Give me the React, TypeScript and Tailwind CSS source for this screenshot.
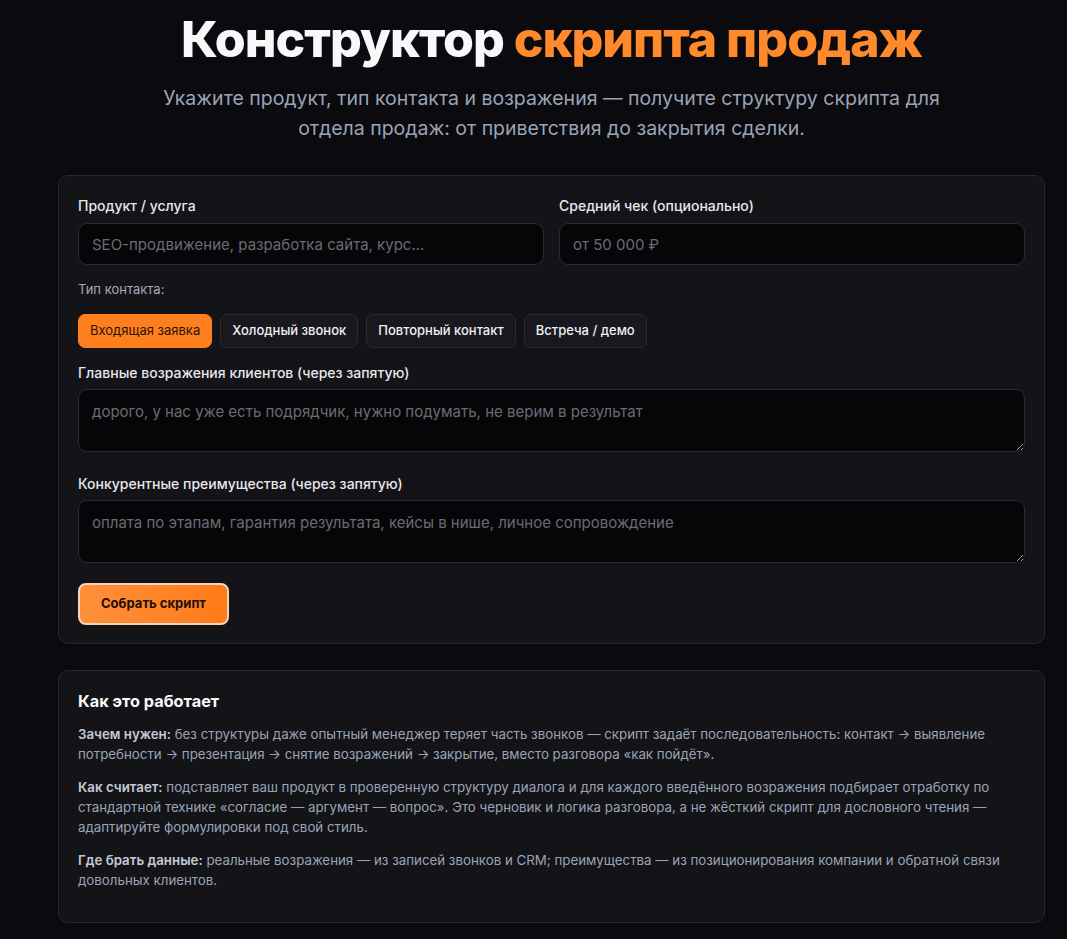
import { useState } from 'react'

const kinds = ['Входящая заявка', 'Холодный звонок', 'Повторный контакт', 'Встреча / демо']

const fieldCls =
  'w-full rounded-[9px] border border-[#2a2a31] bg-[#060609] px-[13px] text-[15px] text-white placeholder:text-[#6b6b74] outline-none'

export default function App() {
  const [kind, setKind] = useState(0)

  return (
    <div className="min-h-screen bg-[#0a0a0f] font-['Inter',sans-serif] text-white pl-[58px] pr-[22px] pb-6">
      <div className="text-center pt-[10px]">
        <h1 className="text-[50px] leading-[58px] font-extrabold tracking-[-0.02em] text-[#f8f8fa]">
          Конструктор <span className="text-[#ff8a2b]">скрипта продаж</span>
        </h1>
        <p className="mx-auto mt-[15px] max-w-[800px] text-[19.5px] leading-[30px] text-[#9aa4b6]">
          Укажите продукт, тип контакта и возражения — получите структуру скрипта для отдела продаж: от приветствия до закрытия сделки.
        </p>
      </div>

      <div className="mt-[32px] rounded-[10px] border border-[#26262d] bg-[#131318] px-[19px] pt-[19px] pb-[18px]">
        <div className="grid grid-cols-2 gap-[15px]">
          <div>
            <label className="block text-[14px] font-medium text-[#e8e8ec] mb-[7px]">Продукт / услуга</label>
            <input className={`${fieldCls} h-[42px]`} placeholder="SEO-продвижение, разработка сайта, курс..." />
          </div>
          <div>
            <label className="block text-[14px] font-medium text-[#e8e8ec] mb-[7px]">Средний чек (опционально)</label>
            <input className={`${fieldCls} h-[42px]`} placeholder="от 50 000 ₽" />
          </div>
        </div>

        <div className="mt-[15px] text-[13px] text-[#a3abba]">Тип контакта:</div>
        <div className="mt-[14px] flex gap-[8px]">
          {kinds.map((k, i) => (
            <button
              key={k}
              onClick={() => setKind(i)}
              className={
                i === kind
                  ? 'h-[34px] px-[11px] rounded-[7px] border border-[#ff7f1f] bg-[#ff7f1f] text-[13px] text-[#2a1405]'
                  : 'h-[34px] px-[11px] rounded-[7px] border border-[#2a2a31] bg-[#18181e] text-[13px] font-medium text-[#f0f0f3]'
              }
            >
              {k}
            </button>
          ))}
        </div>

        <label className="block mt-[14px] text-[14px] font-medium text-[#e8e8ec] mb-[6px]">
          Главные возражения клиентов (через запятую)
        </label>
        <textarea
          className={`${fieldCls} block h-[63px] py-[11px]`}
          placeholder="дорого, у нас уже есть подрядчик, нужно подумать, не верим в результат"
        />

        <label className="block mt-[21px] text-[14px] font-medium text-[#e8e8ec] mb-[6px]">
          Конкурентные преимущества (через запятую)
        </label>
        <textarea
          className={`${fieldCls} block h-[63px] py-[11px]`}
          placeholder="оплата по этапам, гарантия результата, кейсы в нише, личное сопровождение"
        />

        <button className="mt-[20px] h-[42px] px-[21px] rounded-[8px] border-2 border-[#f3d6bd] bg-gradient-to-r from-[#ff8f3a] to-[#ff7b14] text-[13px] font-bold text-[#1f0f04]">
          Собрать скрипт
        </button>
      </div>

      <div className="mt-[26px] rounded-[10px] border border-[#26262d] bg-[#131318] px-[19px] pt-[19px] pb-[32px]">
        <h2 className="text-[16.3px] font-bold text-[#f8f8fa] leading-[22px]">Как это работает</h2>
        <div className="mt-[12px] flex flex-col gap-[13px] text-[13.3px] leading-[20px] text-[#9aa4b6]">
          <p>
            <b className="font-semibold text-[#c3cad6]">Зачем нужен:</b> без структуры даже опытный менеджер теряет часть звонков — скрипт задаёт последовательность: контакт → выявление потребности → презентация → снятие возражений → закрытие, вместо разговора «как пойдёт».
          </p>
          <p>
            <b className="font-semibold text-[#c3cad6]">Как считает:</b> подставляет ваш продукт в проверенную структуру диалога и для каждого введённого возражения подбирает отработку по стандартной технике «согласие — аргумент — вопрос». Это черновик и логика разговора, а не жёсткий скрипт для дословного чтения — адаптируйте формулировки под свой стиль.
          </p>
          <p>
            <b className="font-semibold text-[#c3cad6]">Где брать данные:</b> реальные возражения — из записей звонков и CRM; преимущества — из позиционирования компании и обратной связи довольных клиентов.
          </p>
        </div>
      </div>
    </div>
  )
}
